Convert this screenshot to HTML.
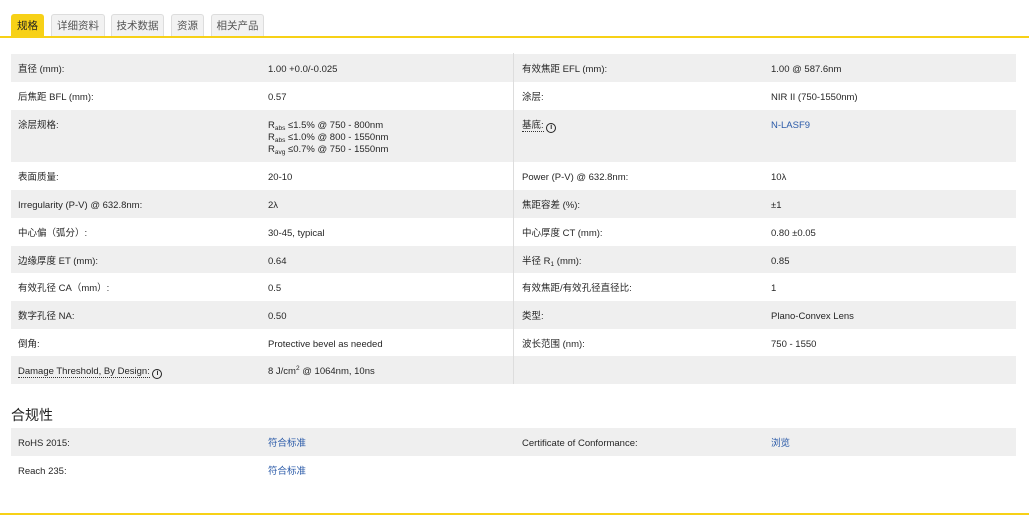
<!DOCTYPE html><html><head><meta charset="utf-8"><style>
*{margin:0;padding:0;box-sizing:border-box}
body{width:1029px;height:515px;background:#fff;font-family:"Liberation Sans","Noto Sans CJK SC",sans-serif;font-size:9.5px;color:#262626;position:relative;overflow:hidden}
.tab{position:absolute;top:14px;height:23px;border:1px solid #ddd;border-bottom:none;background:#f2f2f2;color:#555;font-size:10.5px;line-height:23px;text-align:center;border-radius:3px 3px 0 0}
.tab.a{background:#f7d117;border-color:#f7d117;color:#222}
.line{position:absolute;left:0;width:1029px;height:2px;background:#f7d117}
.row{position:absolute;left:11px;width:1005px}
.row.g{background:#efefef}
.c{position:absolute;top:0;line-height:12px;padding-top:9.5px}
.div{position:absolute;left:513px;top:53px;width:1px;height:331px;background:#ddd}
a{color:#2a5aa8;text-decoration:none}
.u{border-bottom:1px dotted #333}
.i{display:inline-block;width:10px;height:10px;border:1.5px solid #222;border-radius:50%;font-size:7px;line-height:7px;text-align:center;font-weight:bold;vertical-align:-1px}
sub{font-size:6.5px;vertical-align:-2px;line-height:0}
sup{font-size:6.5px;line-height:0}
h3{position:absolute;left:11px;top:405px;font-size:14px;font-weight:normal;color:#222}
</style></head><body>
<div class="tab a" style="left:11px;width:33px">规格</div>
<div class="tab" style="left:51px;width:54px">详细资料</div>
<div class="tab" style="left:111px;width:53px">技术数据</div>
<div class="tab" style="left:171px;width:33px">资源</div>
<div class="tab" style="left:211px;width:53px">相关产品</div>
<div class="line" style="top:36px"></div>

<div class="row g" style="top:54px;height:28px"><div class="c" style="left:7px">直径 (mm):</div><div class="c" style="left:257px">1.00 +0.0/-0.025</div><div class="c" style="left:511px">有效焦距 EFL (mm):</div><div class="c" style="left:760px">1.00 @ 587.6nm</div></div>
<div class="row" style="top:82px;height:28px"><div class="c" style="left:7px">后焦距 BFL (mm):</div><div class="c" style="left:257px">0.57</div><div class="c" style="left:511px">涂层:</div><div class="c" style="left:760px">NIR II (750-1550nm)</div></div>
<div class="row g" style="top:110px;height:52px"><div class="c" style="left:7px">涂层规格:</div><div class="c" style="left:257px">R<sub>abs</sub> ≤1.5% @ 750 - 800nm<br>R<sub>abs</sub> ≤1.0% @ 800 - 1550nm<br>R<sub>avg</sub> ≤0.7% @ 750 - 1550nm</div><div class="c" style="left:511px"><span class="u">基底:</span> <span class="i">i</span></div><div class="c" style="left:760px"><a>N-LASF9</a></div></div>
<div class="row" style="top:162px;height:28px"><div class="c" style="left:7px">表面质量:</div><div class="c" style="left:257px">20-10</div><div class="c" style="left:511px">Power (P-V) @ 632.8nm:</div><div class="c" style="left:760px">10λ</div></div>
<div class="row g" style="top:190px;height:28px"><div class="c" style="left:7px">Irregularity (P-V) @ 632.8nm:</div><div class="c" style="left:257px">2λ</div><div class="c" style="left:511px">焦距容差 (%):</div><div class="c" style="left:760px">±1</div></div>
<div class="row" style="top:218px;height:28px"><div class="c" style="left:7px">中心偏（弧分）:</div><div class="c" style="left:257px">30-45, typical</div><div class="c" style="left:511px">中心厚度 CT (mm):</div><div class="c" style="left:760px">0.80 ±0.05</div></div>
<div class="row g" style="top:246px;height:27px"><div class="c" style="left:7px">边缘厚度 ET (mm):</div><div class="c" style="left:257px">0.64</div><div class="c" style="left:511px">半径 R<sub>1</sub> (mm):</div><div class="c" style="left:760px">0.85</div></div>
<div class="row" style="top:273px;height:28px"><div class="c" style="left:7px">有效孔径 CA（mm）:</div><div class="c" style="left:257px">0.5</div><div class="c" style="left:511px">有效焦距/有效孔径直径比:</div><div class="c" style="left:760px">1</div></div>
<div class="row g" style="top:301px;height:28px"><div class="c" style="left:7px">数字孔径 NA:</div><div class="c" style="left:257px">0.50</div><div class="c" style="left:511px">类型:</div><div class="c" style="left:760px">Plano-Convex Lens</div></div>
<div class="row" style="top:329px;height:27px"><div class="c" style="left:7px">倒角:</div><div class="c" style="left:257px">Protective bevel as needed</div><div class="c" style="left:511px">波长范围 (nm):</div><div class="c" style="left:760px">750 - 1550</div></div>
<div class="row g" style="top:356px;height:28px"><div class="c" style="left:7px"><span class="u">Damage Threshold, By Design:</span> <span class="i">i</span></div><div class="c" style="left:257px">8 J/cm<sup>2</sup> @ 1064nm, 10ns</div></div>
<div class="div"></div>

<h3>合规性</h3>
<div class="row g" style="top:428px;height:28px"><div class="c" style="left:7px">RoHS 2015:</div><div class="c" style="left:257px"><a>符合标准</a></div><div class="c" style="left:511px">Certificate of Conformance:</div><div class="c" style="left:760px"><a>浏览</a></div></div>
<div class="row" style="top:456px;height:28px"><div class="c" style="left:7px">Reach 235:</div><div class="c" style="left:257px"><a>符合标准</a></div></div>
<div class="line" style="top:513px;height:2px"></div>
</body></html>
